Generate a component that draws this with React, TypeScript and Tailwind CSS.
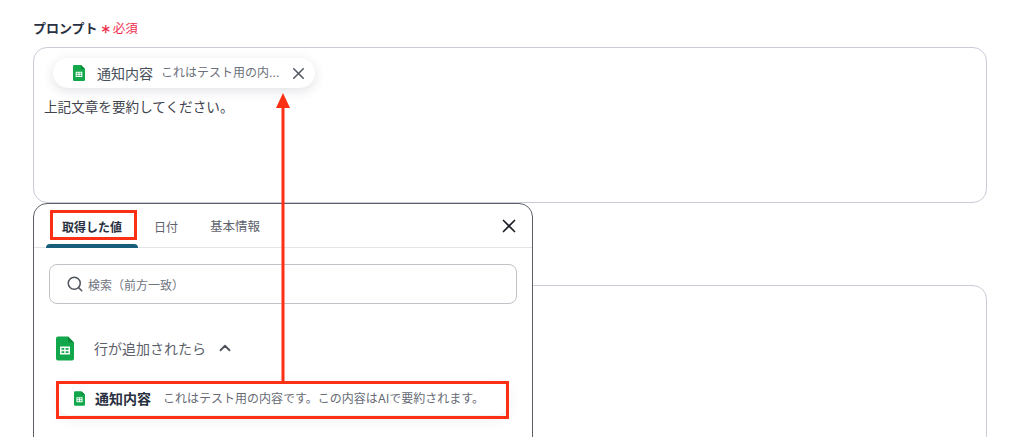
import { ChevronUp, Search, X } from "lucide-react";

const font = "font-['Inter','Noto_Sans_CJK_JP',sans-serif]";

function SheetIcon({ className }: { className: string }) {
  return (
    <svg viewBox="0 0 18 24" className={className}>
      <path d="M2 0h10l6 6v16a2 2 0 0 1-2 2H2a2 2 0 0 1-2-2V2a2 2 0 0 1 2-2z" fill="#11a74a" />
      <path d="M12 0l6 6h-4.500a1.500 1.500 0 0 1-1.500-1.500z" fill="#0c8a3b" />
      <path d="M4 10h10v8H4z M5.500 11.500v1.800h2.800v-1.800z M9.700 11.500v1.800h2.800v-1.800z M5.500 14.700v1.800h2.800v-1.800z M9.700 14.700v1.800h2.800v-1.800z" fill="#fff" fillRule="evenodd" />
    </svg>
  );
}

export default function App() {
  return (
    <div className={`relative h-[437px] w-[1022px] overflow-hidden bg-white ${font}`}>
      <div className="flex flex-col px-[33px] pt-5">
        <div className="flex h-[18px] items-center">
          <span className="text-[13px] font-bold text-[#283041]">プロンプト</span>
          <span className="ml-[3px] mt-[7px] text-[20px] leading-none text-[#f0304f]">*</span>
          <span className="ml-[2px] mt-[1px] text-[12.500px] text-[#f0304f]">必須</span>
        </div>
        <div className="mt-[9px] h-[156px] w-[954px] rounded-[14px] border border-[#c9ccd8] px-[10px] pt-[10px]">
          <div className="ml-[9px] flex h-[30px] w-[262px] items-center rounded-full bg-white pl-5 shadow-[0_3px_12px_rgba(40,50,70,0.14)]">
            <SheetIcon className="h-[16px] w-[12px] shrink-0" />
            <span className="ml-[12px] text-[14px] text-[#4a4f5c]">通知内容</span>
            <span className="ml-2 text-[12px] text-[#6b6f7a]">これはテスト用の内...</span>
            <X className="ml-[10px] h-[19px] w-[19px] shrink-0 text-[#555a66]" strokeWidth={2} />
          </div>
          <p className="mt-[9px] text-[13.600px] leading-5 text-[#3f434d]">上記文章を要約してください。</p>
        </div>
        <div className="mt-[82px] h-[200px] w-[954px] rounded-[14px] border border-[#c9ccd8]" />
      </div>

      {/* 値の選択ポップオーバー */}
      <div className="absolute left-[33px] top-[203px] h-[260px] w-[500px] rounded-[14px] border border-[#5c5f66] bg-white">
        <div className="flex h-[44px] items-center justify-between border-b border-[#e3e4e8] pl-[12px] pr-[12px]">
          <div className="flex h-full items-start text-[12px]">
            <div className="relative flex h-full w-[92px] justify-center pt-[15px] font-bold text-[#283041]">
              取得した値
              <span className="absolute bottom-[-1px] left-0 h-[4px] w-full rounded-t-[4px] bg-[#185d7a]" />
            </div>
            <span className="ml-[16px] pt-[15px] text-[#5d616b]">日付</span>
            <span className="ml-[32px] pt-[15px] text-[12.500px] leading-4 text-[#5d616b]">基本情報</span>
          </div>
          <X className="h-[22px] w-[22px] text-[#1c1f26]" strokeWidth={1.800} />
        </div>
        <div className="mx-[15px] mt-[16px] flex h-[40px] items-center rounded-[8px] border border-[#c0c2c8] pl-[16px]">
          <Search className="h-[18px] w-[18px] text-[#4f535c]" strokeWidth={2} />
          <span className="ml-[4px] mt-[3px] text-[12px] text-[#71757f]">検索（前方一致）</span>
        </div>
        <div className="ml-[22px] mt-[31px] flex h-[26px] items-center">
          <SheetIcon className="h-[25px] w-[18px]" />
          <span className="ml-[20px] text-[14px] text-[#5d616b]">行が追加されたら</span>
          <ChevronUp className="ml-[10px] h-[18px] w-[18px] text-[#4f535c]" strokeWidth={2.400} />
        </div>
        <div className="ml-[25px] mt-[21px] flex h-[33px] w-[448px] items-center rounded-[10px] bg-white pl-[15px] shadow-[0_3px_14px_rgba(40,50,70,0.10)]">
          <SheetIcon className="h-[15px] w-[11px]" />
          <span className="ml-[10px] text-[14px] font-bold text-[#283041]">通知内容</span>
          <span className="ml-[12px] text-[12px] text-[#666a74]">これはテスト用の内容です。この内容はAIで要約されます。</span>
        </div>
      </div>

      {/* 注釈 */}
      <div className="absolute left-[50px] top-[210px] h-[30px] w-[87px] border-[3px] border-[#fb3014]" />
      <div className="absolute left-[56px] top-[381px] h-[38px] w-[453px] border-[3px] border-[#fb3014]" />
      <svg className="absolute left-[270px] top-[90px] h-[292px] w-[26px]" viewBox="0 0 26 292">
        <path d="M11.500 16h3v276h-3z" fill="#fb3014" />
        <path d="M13 3l7 15H6z" fill="#fb3014" />
      </svg>
    </div>
  );
}
